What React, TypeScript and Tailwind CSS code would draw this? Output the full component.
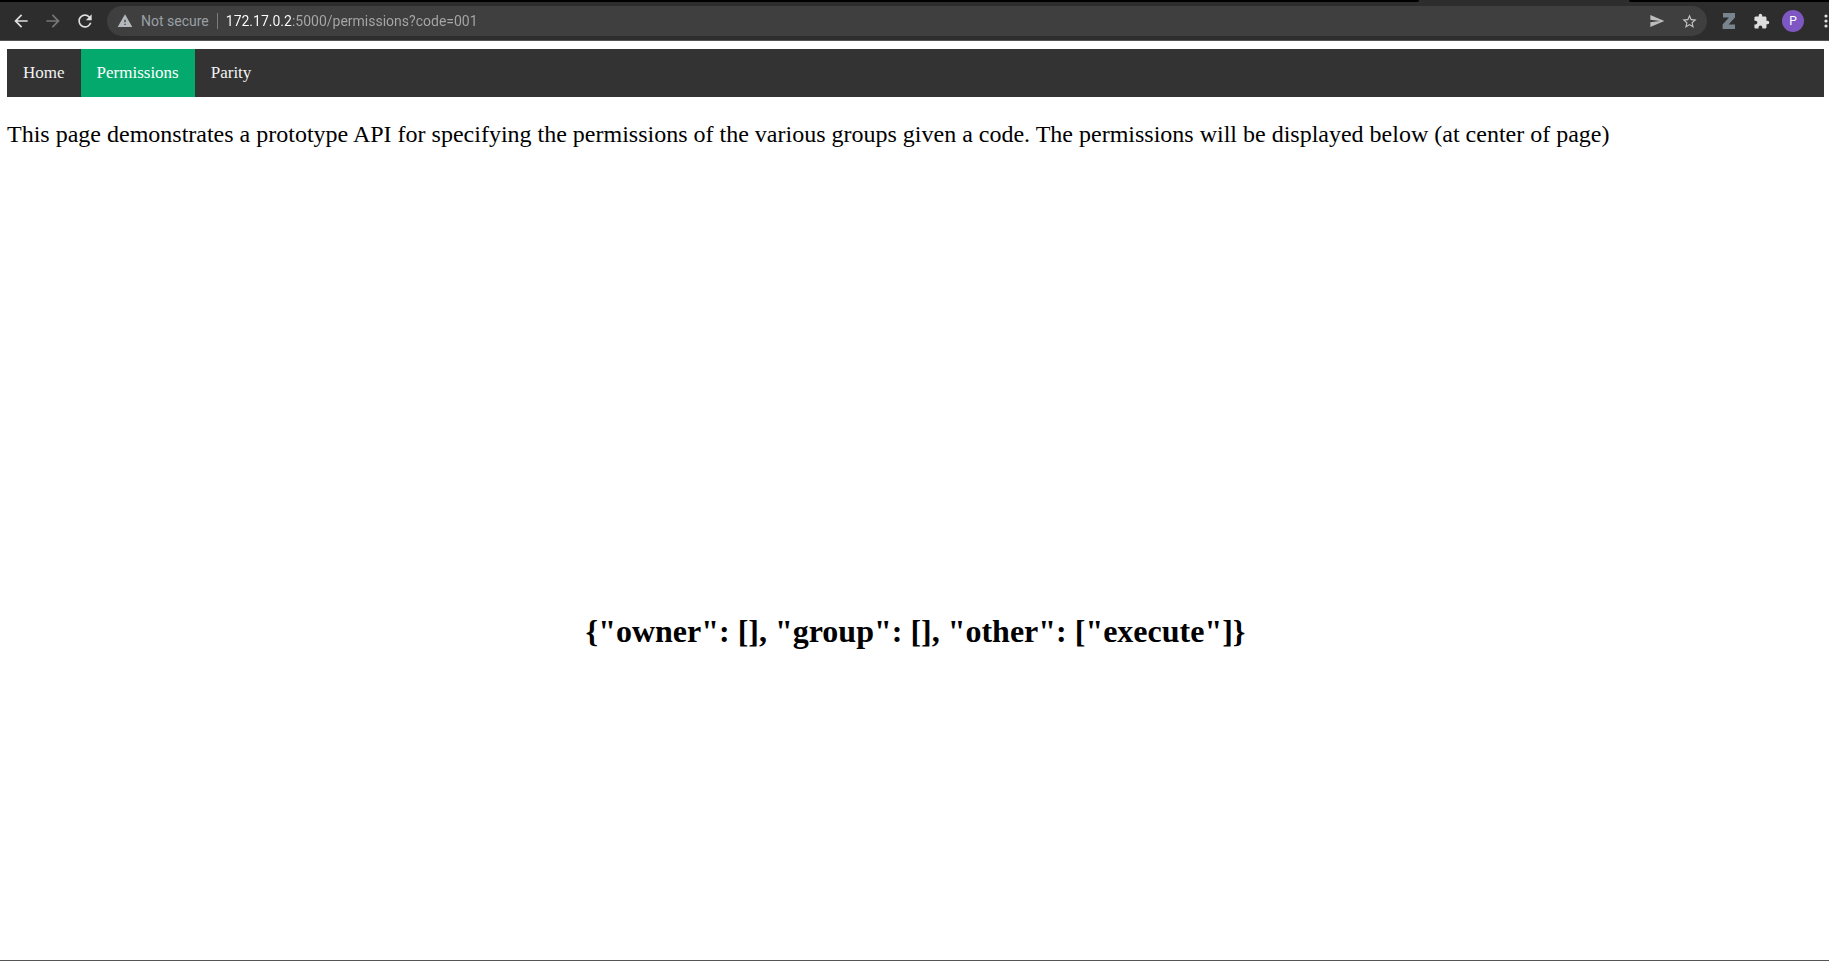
import { useState } from "react";
import type { ReactNode } from "react";
import {
  MdArrowBack,
  MdArrowForward,
  MdExtension,
  MdRefresh,
  MdSend,
  MdStarBorder,
  MdWarning,
} from "react-icons/md";

function ToolButton({ label, children }: { label: string; children: ReactNode }) {
  return (
    <button
      type="button"
      aria-label={label}
      className="flex h-[30px] w-8 shrink-0 items-center justify-center text-[#dedede]"
    >
      {children}
    </button>
  );
}

function TabStrip() {
  return (
    <div className="flex h-[2px] shrink-0 bg-[#2d2d2d]">
      <div className="grow rounded-br-[3px] bg-black" />
      <div className="w-[210px]" />
      <div className="w-[200px] rounded-bl-[3px] bg-black" />
    </div>
  );
}

function AddressBar() {
  const [url, setUrl] = useState("172.17.0.2:5000/permissions?code=001");
  return (
    <div className="flex h-[30px] grow items-center rounded-full bg-[#3f3f3f] pl-2.5 pr-0.5">
      <button type="button" className="flex items-center gap-2 text-[#9aa0a6]">
        <MdWarning size={16} className="text-[#b4b7bb]" />
        <span className="leading-4">Not secure</span>
      </button>
      <span className="mx-2 h-4 w-px bg-[#7c7c7c]" />
      <input
        type="text"
        aria-label="Address"
        value={url}
        onChange={(e) => setUrl(e.target.value)}
        className="h-5 min-w-0 grow bg-[linear-gradient(90deg,#ffffff_66px,#a8a8a8_66px)] bg-clip-text text-transparent caret-white outline-none"
      />
      <ToolButton label="Share this page">
        <MdSend size={16} className="text-[#bdbdbd]" />
      </ToolButton>
      <ToolButton label="Bookmark this page">
        <MdStarBorder size={17} className="text-[#c4c4c4]" />
      </ToolButton>
    </div>
  );
}

function Toolbar() {
  return (
    <header className="flex h-[39px] shrink-0 overflow-hidden border-b border-[#555555] bg-[#2d2d2d] pl-[5px] pt-1 font-[Roboto,sans-serif] text-sm">
      <ToolButton label="Back">
        <MdArrowBack size={20} />
      </ToolButton>
      <ToolButton label="Forward">
        <MdArrowForward size={20} className="text-[#777777]" />
      </ToolButton>
      <ToolButton label="Reload">
        <MdRefresh size={20} />
      </ToolButton>
      <div className="flex grow px-1.5">
        <AddressBar />
      </div>
      <ToolButton label="Zotero connector">
        <svg width="14" height="16" viewBox="0 0 14 16">
          <path d="M1 0h12v4.6L6.6 11.6H13V16H.6v-4.6L7 4.6H1z" fill="#78848e" />
        </svg>
      </ToolButton>
      <ToolButton label="Extensions">
        <MdExtension size={17} />
      </ToolButton>
      <ToolButton label="Profile">
        <span className="flex size-[22px] items-center justify-center rounded-full bg-[#7e57c2] text-xs text-white">
          P
        </span>
      </ToolButton>
      <button
        type="button"
        aria-label="Menu"
        className="flex h-[30px] w-5 shrink-0 items-center justify-end pr-px"
      >
        <svg width="4" height="14" viewBox="0 0 4 14" fill="#dedede">
          <circle cx="2" cy="2" r="1.6" />
          <circle cx="2" cy="7" r="1.6" />
          <circle cx="2" cy="12" r="1.6" />
        </svg>
      </button>
    </header>
  );
}

export default function App() {
  return (
    <div className="flex min-h-screen flex-col overflow-hidden border-b border-[#555555] bg-white font-['Liberation_Serif',serif] text-black">
      <TabStrip />
      <Toolbar />
      <nav className="ml-[7px] mr-[5px] mt-2 flex bg-[#333333] text-[17px] leading-5 text-[#f2f2f2]">
        <a href="#home" className="px-4 py-3.5">
          Home
        </a>
        <a href="#permissions" aria-current="page" className="bg-[#04aa6d] px-4 py-3.5 text-white">
          Permissions
        </a>
        <a href="#parity" className="px-4 py-3.5">
          Parity
        </a>
      </nav>
      <main className="flex grow flex-col pl-[7px] pr-[5px] pt-6">
        <p className="text-2xl leading-[26px]">
          This page demonstrates a prototype API for specifying the permissions of the various groups
          given a code. The permissions will be displayed below (at center of page)
        </p>
        <div className="flex grow items-center justify-center pt-[154px]">
          <h1 className="text-[32px] font-bold leading-9">
            {'{"owner": [], "group": [], "other": ["execute"]}'}
          </h1>
        </div>
      </main>
    </div>
  );
}
